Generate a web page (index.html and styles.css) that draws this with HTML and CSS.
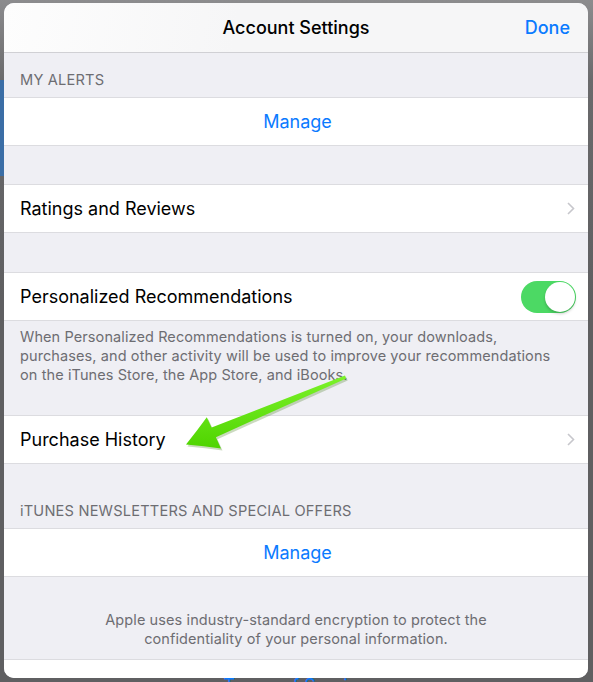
FILE: index.html
```html
<!DOCTYPE html>
<html lang="en">
<head>
    <meta charset="UTF-8">
    <meta name="viewport" content="width=device-width, initial-scale=1.0">
    <title>Account Settings</title>
    <link rel="stylesheet" href="styles.css">
</head>
<body>
    <div class="sheet">
        <header class="nav-bar">
            <span></span>
            <h1 class="nav-title">Account Settings</h1>
            <a class="nav-done">Done</a>
        </header>

        <div class="section-header">MY ALERTS</div>
        <div class="row row-action">Manage</div>

        <div class="spacer"></div>
        <div class="row">
            <span class="row-label">Ratings and Reviews</span>
            <svg class="chevron" width="8" height="13" viewBox="0 0 8 13"><path d="M1 1l5.5 5.5L1 12" fill="none" stroke="#c7c7cc" stroke-width="1.6"/></svg>
        </div>

        <div class="spacer spacer-tall"></div>
        <div class="row">
            <span class="row-label">Personalized Recommendations</span>
            <div class="toggle"><div class="toggle-knob"></div></div>
        </div>
        <p class="footer-text">When Personalized Recommendations is turned on, your downloads, purchases, and other activity will be used to improve your recommendations on the iTunes Store, the App Store, and iBooks.</p>

        <div class="row">
            <span class="row-label">Purchase History</span>
            <svg class="chevron" width="8" height="13" viewBox="0 0 8 13"><path d="M1 1l5.5 5.5L1 12" fill="none" stroke="#c7c7cc" stroke-width="1.6"/></svg>
        </div>

        <div class="section-header section-header-tall">iTUNES NEWSLETTERS AND SPECIAL OFFERS</div>
        <div class="row row-action">Manage</div>

        <p class="footer-text footer-center">Apple uses industry-standard encryption to protect the<br>confidentiality of your personal information.</p>

        <div class="row-terms"><span>Terms of Service</span></div>
    </div>

    <svg class="arrow" width="593" height="682" viewBox="0 0 593 682">
        <defs>
            <linearGradient id="arrowFill" x1="0" y1="0" x2="0" y2="1">
                <stop offset="0" stop-color="#7cf22a"/>
                <stop offset="1" stop-color="#4fd400"/>
            </linearGradient>
        </defs>
        <path d="M345 375.6 L211.6 427.4 L206.8 417.2 Q196 432 186 444.5 Q204 446 221 448.4 L215.9 437.2 L346.2 378.4 Z" fill="#2f6b00" opacity="0.25" transform="translate(1.5 2)"/>
        <path d="M345 375.6 L211.6 427.4 L206.8 417.2 Q196 432 186 444.5 Q204 446 221 448.4 L215.9 437.2 L346.2 378.4 Z" fill="url(#arrowFill)"/>
    </svg>
</body>
</html>
```

FILE: styles.css
```css
body {
    margin: 0;
    height: 682px;
    overflow: hidden;
    padding-top: 3px;
    box-sizing: border-box;
    position: relative;
    font-family: Inter, "Noto Sans", sans-serif;
    background:
        linear-gradient(#3b6ea6, #3b6ea6) 0 80px / 4px 96px no-repeat,
        linear-gradient(#8c8c8e, #6a6a6c 80px, #5f5f61 300px);
}

.sheet {
    margin-left: 4px;
    width: 584px;
    height: 675px;
    background-color: #efeff4;
    border-radius: 10px;
}

.nav-bar {
    height: 50px;
    box-sizing: border-box;
    display: grid;
    grid-template-columns: 1fr auto 1fr;
    align-items: center;
    background: linear-gradient(100deg, #fdfdfd, #f6f6f7 40%);
    border-bottom: 1px solid #d0d0d4;
    border-radius: 10px 10px 0 0;
}

.nav-title {
    margin: 0;
    font-size: 18px;
    font-weight: 500;
    color: #000;
}

.nav-done {
    justify-self: end;
    padding-right: 18px;
    font-size: 18px;
    font-weight: 500;
    color: #0a7aff;
}

.section-header {
    height: 44px;
    box-sizing: border-box;
    display: flex;
    align-items: flex-end;
    padding: 0 16px 9px;
    font-size: 14.6px;
    line-height: 16px;
    letter-spacing: 0.2px;
    color: #6d6d72;
}

.section-header-tall {
    height: 64px;
}

.row {
    height: 49px;
    box-sizing: border-box;
    display: flex;
    align-items: center;
    justify-content: space-between;
    padding: 0 13px 0 16px;
    background-color: #fff;
    border-top: 1px solid #dcdce0;
    border-bottom: 1px solid #dcdce0;
    font-size: 18px;
    color: #000;
}

.row-action {
    justify-content: center;
    color: #0a7aff;
}

.spacer {
    height: 38px;
}

.spacer-tall {
    height: 39px;
}

.toggle {
    width: 55px;
    height: 32px;
    box-sizing: border-box;
    display: flex;
    justify-content: flex-end;
    align-items: center;
    padding: 1px;
    margin-right: -1px;
    border-radius: 16px;
    background-color: #4cd964;
}

.toggle-knob {
    width: 30px;
    height: 30px;
    border-radius: 50%;
    background-color: #fff;
    box-shadow: 0 2px 3px rgba(0, 0, 0, 0.2);
}

.footer-text {
    height: 94px;
    box-sizing: border-box;
    margin: 0;
    padding: 6px 26px 0 16px;
    font-size: 14.5px;
    line-height: 19px;
    letter-spacing: 0.1px;
    color: #6d6d72;
}

.footer-center {
    height: 82px;
    padding: 33px 16px 0;
    text-align: center;
}

.row-terms {
    height: 19px;
    box-sizing: border-box;
    padding-top: 15px;
    text-align: center;
    background-color: #fff;
    border-top: 1px solid #dcdce0;
    border-radius: 0 0 10px 10px;
    font-size: 18px;
    line-height: 22px;
    color: #0a7aff;
}

.arrow {
    position: absolute;
    top: 0;
    left: 0;
    pointer-events: none;
}
```
